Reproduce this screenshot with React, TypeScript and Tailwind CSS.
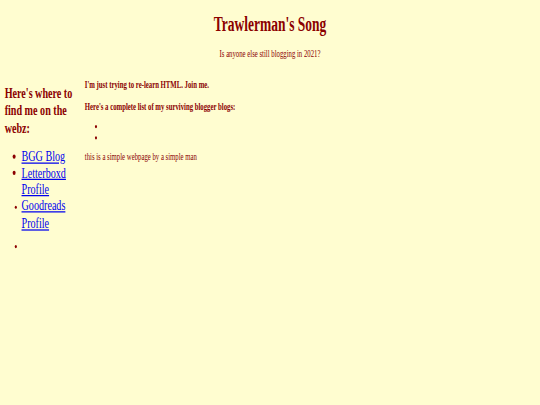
import React from "react";

// the reference is a 1280x648 page shrunk into 540x405, so the page is laid out
// at its own size and scaled down as one block
const links = [
  { label: "BGG Blog", small: false },
  { label: "Letterboxd Profile", small: false },
  { label: "Goodreads Profile", small: true },
];

export default function App() {
  return (
    <div className="w-[540px] h-[405px] overflow-hidden bg-[#fffdd0]">
      <div
        className="flow-root w-[1280px] h-[648px] origin-top-left scale-x-[0.421875] scale-y-[0.625] px-2 text-[#8b0000] text-[16px] leading-[1.15]"
        style={{ fontFamily: '"Liberation Serif", "Times New Roman", serif' }}
      >
        <h1 className="mt-[20px] mb-[20px] text-center text-[32px] font-bold">
          Trawlerman's Song
        </h1>
        <p className="my-4 text-center">Is anyone else still blogging in 2021?</p>

        <div className="flex">
          {/* sidebar */}
          <div className="w-[190px] pl-[3px]">
            <h2 className="mt-[24.5px] mb-[19px] text-[24px] font-bold">
              Here's where to find me on the webz:
            </h2>
            <ul className="mt-4 mb-[12px] list-disc pl-10">
              {links.map(l => (
                <li
                  key={l.label}
                  className={l.small ? "text-[16px] leading-[26px]" : "text-[24px] leading-[26px]"}
                >
                  <a href="#" className="text-[24px] text-[#0000ee] underline">
                    {l.label}
                  </a>
                </li>
              ))}
            </ul>
            <ul className="mt-[12px] mb-4 list-disc pl-10">
              <li className="text-[16px]"></li>
            </ul>
          </div>

          {/* main column */}
          <div className="flex-1 pl-[3px]">
            <p className="my-4 font-bold">I'm just trying to re-learn HTML. Join me.</p>
            <p className="mt-4 mb-[13px] font-bold">
              Here's a complete list of my surviving blogger blogs:
            </p>
            <ul className="mt-[13px] mb-[12px] list-disc pl-10">
              <li></li>
              <li></li>
            </ul>
            <p className="mt-[12px] mb-4">this is a simple webpage by a simple man</p>
          </div>
        </div>
      </div>
    </div>
  );
}
